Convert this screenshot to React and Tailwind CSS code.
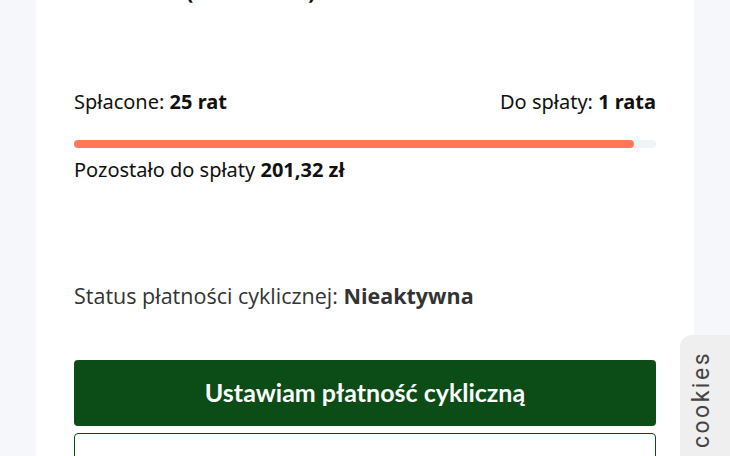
import React from 'react';

export default function App() {
  const paid = 25;
  const total = 26;
  const pct = 96.2;

  return (
    <div className="relative h-[456px] w-[730px] overflow-hidden bg-[#f6f7fb]">
      <div className="mx-[36px] flow-root h-full bg-white px-[38px]">
        {/* heading cut off at the top of the screen */}
        <div
          className="-mt-[22px] h-[25px] pl-[112px] text-[22px] leading-[25px] text-[#111]"
          style={{ fontFamily: '"Noto Sans", sans-serif' }}
        >
          <span className="font-bold">(nr 26/2023)</span>
        </div>

        <div style={{ fontFamily: '"Noto Sans", sans-serif' }} className="text-[20px] text-[#111]">
          <div className="mt-[86px] flex items-center justify-between leading-[26px]">
            <span>
              Spłacone: <b>{paid} rat</b>
            </span>
            <span>
              Do spłaty: <b>{total - paid} rata</b>
            </span>
          </div>
          <div className="mt-[25px] h-[8px] w-full rounded-full bg-[#f0f4f8]">
            <div className="h-full rounded-full bg-[#ff7757]" style={{ width: pct + '%' }} />
          </div>
          <div className="mt-[9px] leading-[26px]">
            Pozostało do spłaty <b>201,32 zł</b>
          </div>
        </div>

        <div
          className="mt-[99px] text-[21.5px] leading-[28px] text-[#333]"
          style={{ fontFamily: '"Open Sans", sans-serif' }}
        >
          Status płatności cyklicznej: <b>Nieaktywna</b>
        </div>

        <button
          className="mt-[50px] flex h-[66px] w-full items-center justify-center rounded-[4px] bg-[#0b4c17] text-[25px] font-bold text-white"
          style={{ fontFamily: 'Lato, sans-serif' }}
        >
          Ustawiam płatność cykliczną
        </button>
        <button className="mt-[7px] h-[60px] w-full rounded-[4px] border border-[#0b4c17] bg-white" />
      </div>

      <div className="absolute left-[680px] top-[335px] flex h-[140px] w-[60px] items-start justify-start rounded-tl-[12px] bg-[#efefef]">
        <span
          className="mt-[16px] ml-[5px] block rotate-180 text-[23px] tracking-[2.5px] text-[#444] [writing-mode:vertical-rl]"
          style={{ fontFamily: 'Roboto, sans-serif' }}
        >
          cookies
        </span>
      </div>
    </div>
  );
}
